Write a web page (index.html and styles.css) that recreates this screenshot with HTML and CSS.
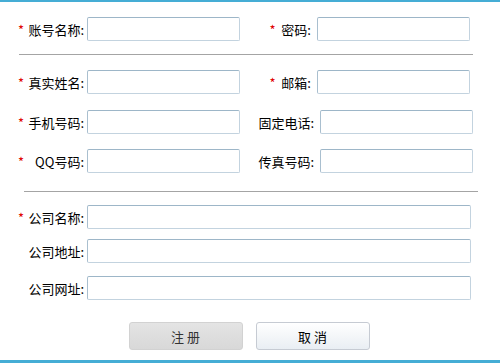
FILE: index.html
```html
<!DOCTYPE html>
<html lang="zh-CN">
<head>
  <meta charset="UTF-8">
  <meta name="viewport" content="width=device-width, initial-scale=1.0">
  <title>注册</title>
  <link rel="stylesheet" href="styles.css">
</head>
<body>

  <div class="page">
    <form id="registerForm">

      <div class="row">
        <label class="label" for="account"><span class="req">*</span><span class="text">账号名称:</span></label>
        <input type="text" id="account" class="input">
        <label class="label2" for="password"><span class="req">*</span>&nbsp;&nbsp;密码:</label>
        <input type="password" id="password" class="input">
      </div>

      <hr class="line line-one">

      <div class="row">
        <label class="label" for="realname"><span class="req">*</span><span class="text">真实姓名:</span></label>
        <input type="text" id="realname" class="input">
        <label class="label2" for="email"><span class="req">*</span>&nbsp;&nbsp;邮箱:</label>
        <input type="text" id="email" class="input">
      </div>

      <div class="row row-gap">
        <label class="label" for="mobile"><span class="req">*</span><span class="text">手机号码:</span></label>
        <input type="text" id="mobile" class="input">
        <label class="label2 wide" for="phone">固定电话:</label>
        <input type="text" id="phone" class="input">
      </div>

      <div class="row row-gap2">
        <label class="label" for="qq"><span class="req">*</span><span class="text">QQ号码:</span></label>
        <input type="text" id="qq" class="input">
        <label class="label2 wide" for="fax">传真号码:</label>
        <input type="text" id="fax" class="input">
      </div>

      <hr class="line line-two">

      <div class="row">
        <label class="label" for="company"><span class="req">*</span><span class="text">公司名称:</span></label>
        <input type="text" id="company" class="input input-long">
      </div>

      <div class="row row-small">
        <label class="label" for="address"><span class="text">公司地址:</span></label>
        <input type="text" id="address" class="input input-long">
      </div>

      <div class="row row-mid">
        <label class="label" for="website"><span class="text">公司网址:</span></label>
        <input type="text" id="website" class="input input-long">
      </div>

      <div class="buttons">
        <button type="submit" class="btn btn-submit">注 册</button>
        <button type="button" class="btn btn-cancel">取 消</button>
      </div>

    </form>
  </div>

</body>
</html>
```

FILE: styles.css
```css
body {
  margin: 0;
  padding: 0;
  background-color: #ffffff;
  font-family: "Noto Sans CJK SC", "Liberation Sans", sans-serif;
  font-size: 13px;
  color: #000;
}

.page {
  width: 500px;
  height: 363px;
  box-sizing: border-box;
  border-top: 2px solid #45add5;
  border-bottom: 3px solid #45add5;
}

.row {
  display: flex;
  align-items: center;
  height: 24px;
  margin-top: 15px;
}

.row-gap {
  margin-top: 16px;
}

.row-gap2 {
  margin-top: 15px;
}

.row-small {
  margin-top: 10px;
}

.row-mid {
  margin-top: 13px;
}

.label {
  display: flex;
  align-items: center;
  box-sizing: border-box;
  width: 71px;
  margin-left: 16px;
  padding: 0 3px 0 2px;
  white-space: nowrap;
}

.label .text {
  margin-left: auto;
}

.label2 {
  box-sizing: border-box;
  width: 77px;
  padding-right: 6px;
  text-align: right;
  white-space: nowrap;
}

.label2.wide {
  width: 80px;
}

.req {
  color: #e00000;
  font-size: 13px;
}

.input {
  width: 153px;
  height: 24px;
  box-sizing: border-box;
  margin: 0;
  padding: 2px 4px;
  border: 1px solid #c3d3df;
  border-top-color: #9db6c8;
  border-left-color: #a9bfcf;
  border-radius: 2px;
  background: #fff;
  font-family: inherit;
  font-size: 13px;
}

.input-long {
  width: 384px;
}

.line {
  height: 0;
  margin: 13px 0 0;
  border: none;
  border-top: 1px solid #a4a4a4;
}

.line-one {
  width: 454px;
  margin-left: 19px;
}

.line-two {
  width: 454px;
  margin-left: 24px;
  margin-top: 18px;
}

.line-two + .row {
  margin-top: 13px;
}

.buttons {
  display: flex;
  justify-content: center;
  gap: 13px;
  margin-top: 22px;
  padding-right: 2px;
}

.btn {
  width: 114px;
  height: 28px;
  box-sizing: border-box;
  border-radius: 3px;
  font-family: inherit;
  font-size: 13px;
  cursor: pointer;
}

.btn-submit {
  color: #333;
  background: linear-gradient(#e4e4e4, #d8d8d8);
  border: 1px solid #d2d2d2;
}

.btn-cancel {
  color: #000;
  background: linear-gradient(#ffffff, #e9eef3);
  border: 1px solid #c6cbd3;
}
```
